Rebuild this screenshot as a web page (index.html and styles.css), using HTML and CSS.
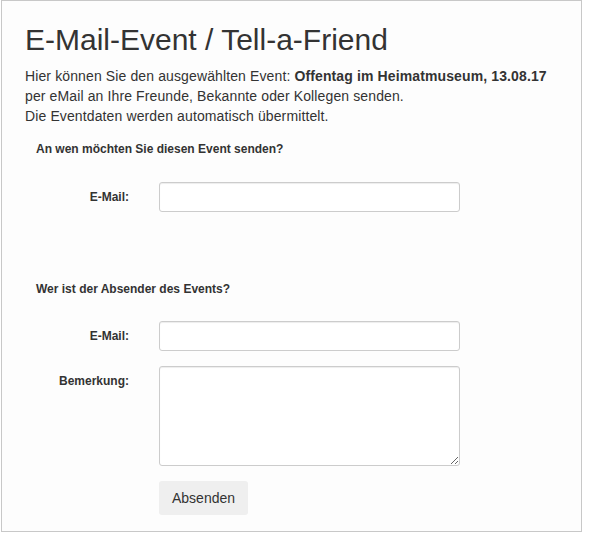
FILE: index.html
```html
<!DOCTYPE html>
<html lang="de">
<head>
    <meta charset="UTF-8">
    <meta name="viewport" content="width=device-width, initial-scale=1.0">
    <title>E-Mail-Event / Tell-a-Friend</title>
    <link rel="stylesheet" href="styles.css">
</head>
<body>
    <div class="frame">
        <h1>E-Mail-Event / Tell-a-Friend</h1>
        <p class="intro">
            Hier können Sie den ausgewählten Event: <strong>Offentag im Heimatmuseum, 13.08.17</strong><br>
            per eMail an Ihre Freunde, Bekannte oder Kollegen senden.<br>
            Die Eventdaten werden automatisch übermittelt.
        </p>

        <form class="tell-form">
            <div class="section-title">An wen möchten Sie diesen Event senden?</div>
            <div class="form-row">
                <label class="form-label" for="to-mail">E-Mail:</label>
                <input class="form-input" type="text" id="to-mail">
            </div>

            <div class="section-title sender">Wer ist der Absender des Events?</div>
            <div class="form-row">
                <label class="form-label" for="from-mail">E-Mail:</label>
                <input class="form-input" type="text" id="from-mail">
            </div>
            <div class="form-row top">
                <label class="form-label" for="note">Bemerkung:</label>
                <textarea class="form-input form-area" id="note"></textarea>
            </div>
            <div class="form-row">
                <span></span>
                <div><button type="button" class="send-button">Absenden</button></div>
            </div>
        </form>
    </div>
</body>
</html>
```

FILE: styles.css
```css
body {
    margin: 0;
    font-family: 'Liberation Sans', Arial, sans-serif;
    color: #333;
    background-color: #fff;
}
.frame {
    box-sizing: border-box;
    width: 581px;
    height: 532px;
    margin-left: 1px;
    border: 1px solid #c8c8c8;
    background-color: #fdfdfd;
    padding: 22px 23px 0 23px;
}
h1 {
    margin: 0;
    font-size: 30px;
    font-weight: normal;
    line-height: 33px;
}
.intro {
    margin: 10px 0 0 0;
    font-size: 14px;
    line-height: 20px;
    letter-spacing: 0.12px;
    white-space: nowrap;
}
.intro strong {
    font-weight: bold;
}
.tell-form {
    margin-top: 13px;
}
.section-title {
    font-size: 12px;
    font-weight: bold;
    line-height: 20px;
    padding-left: 11px;
    margin-bottom: 23px;
}
.section-title.sender {
    margin-top: 67px;
    margin-bottom: 22px;
}
.form-row {
    display: grid;
    grid-template-columns: 104px 301px;
    column-gap: 30px;
    align-items: center;
    margin-bottom: 15px;
}
.form-row.top {
    align-items: start;
}
.form-label {
    font-size: 12px;
    font-weight: bold;
    line-height: 20px;
    text-align: right;
}
.form-row.top .form-label {
    padding-top: 5px;
}
.form-input {
    box-sizing: border-box;
    width: 301px;
    height: 30px;
    margin: 0;
    border: 1px solid #ccc;
    border-radius: 3px;
    background-color: #fff;
    box-shadow: inset 0 1px 1px rgba(0, 0, 0, 0.075);
    font-family: inherit;
    font-size: 14px;
}
.form-area {
    height: 100px;
    display: block;
}
.send-button {
    height: 34px;
    padding: 0 13px;
    border: none;
    border-radius: 3px;
    background-color: #efefef;
    color: #333;
    font-family: inherit;
    font-size: 14px;
    cursor: pointer;
}
```
